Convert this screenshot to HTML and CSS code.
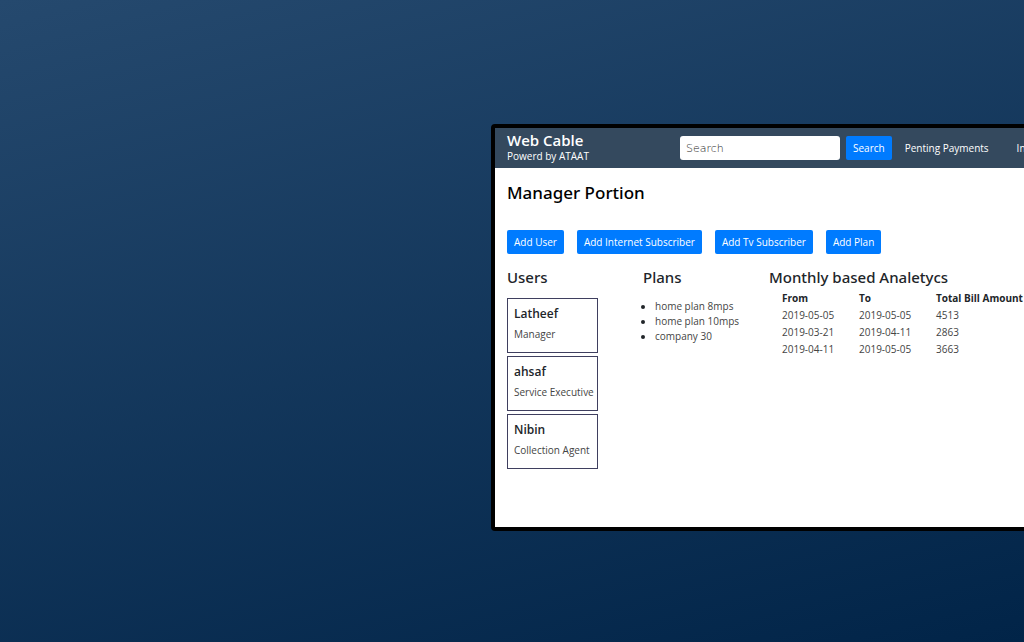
FILE: index.html
```html
<!DOCTYPE html>
<html lang="en">
<head>
<meta charset="utf-8">
<meta name="viewport" content="width=device-width, initial-scale=1">
<title>Web Cable</title>
<link rel="stylesheet" href="styles.css">
</head>
<body>
<main class="stage">
  <div class="window">
    <header class="navbar">
      <div class="brand">
        <div class="brand-name">Web Cable</div>
        <div class="brand-tag">Powerd by ATAAT</div>
      </div>
      <form class="search">
        <input class="search-box" type="text" placeholder="Search" aria-label="Search">
        <button class="btn" type="button">Search</button>
      </form>
      <nav class="links">
        <a class="link" href="#">Penting Payments</a>
        <a class="link" href="#">In</a>
      </nav>
    </header>
    <div class="content">
      <h1 class="title">Manager Portion</h1>
      <div class="actions">
        <button class="btn" type="button">Add User</button>
        <button class="btn" type="button">Add Internet Subscriber</button>
        <button class="btn" type="button">Add Tv Subscriber</button>
        <button class="btn" type="button">Add Plan</button>
      </div>
      <div class="columns">
        <section class="users">
          <h2 class="heading">Users</h2>
          <div class="cards">
            <article class="card"><h3 class="card-name">Latheef</h3><p class="card-role">Manager</p></article>
            <article class="card"><h3 class="card-name">ahsaf</h3><p class="card-role">Service Executive</p></article>
            <article class="card"><h3 class="card-name">Nibin</h3><p class="card-role">Collection Agent</p></article>
          </div>
        </section>
        <section>
          <h2 class="heading">Plans</h2>
          <ul class="plans">
            <li>home plan 8mps</li>
            <li>home plan 10mps</li>
            <li>company 30</li>
          </ul>
        </section>
        <section>
          <h2 class="heading">Monthly based Analetycs</h2>
          <table class="report">
            <thead><tr><th>From</th><th>To</th><th>Total Bill Amount</th></tr></thead>
            <tbody>
              <tr><td>2019-05-05</td><td>2019-05-05</td><td>4513</td></tr>
              <tr><td>2019-03-21</td><td>2019-04-11</td><td>2863</td></tr>
              <tr><td>2019-04-11</td><td>2019-05-05</td><td>3663</td></tr>
            </tbody>
          </table>
        </section>
      </div>
    </div>
  </div>
</main>
</body>
</html>
```
FILE: styles.css
```css
* {
  box-sizing: border-box;
}

body {
  margin: 0;
  font-family: "Open Sans", "Noto Sans", sans-serif;
  font-size: 10px;
  color: #212529;
}

.stage {
  display: flex;
  align-items: flex-start;
  min-height: 100vh;
  padding: 124px 0 24px 47.95%;
  overflow: hidden;
  background: linear-gradient(165deg, #25496e, #012448);
}

.window {
  flex: none;
  width: 720px;
  border: 4px solid #000;
  border-radius: 4px;
  background: #fff;
}

.navbar {
  display: flex;
  align-items: center;
  height: 40px;
  padding: 0 12px;
  background: #34495e;
  color: #fff;
}

.brand {
  width: 173px;
  padding-bottom: 2px;
}

.brand-name {
  font-size: 15px;
  font-weight: 600;
  line-height: 18px;
}

.brand-tag {
  line-height: 14px;
}

.search {
  display: flex;
  gap: 6px;
}

.search-box {
  width: 160px;
  height: 24px;
  padding: 0 6px;
  border: 0;
  border-radius: 3px;
  background: #fff;
  font-family: "DejaVu Sans", sans-serif;
  font-size: 11px;
  font-weight: 200;
}

.search-box::placeholder {
  color: #222;
  opacity: 1;
}

.btn {
  height: 24px;
  padding: 0 7px;
  border: 0;
  border-radius: 2px;
  background: #007bff;
  color: #fff;
  font-family: inherit;
  font-size: 10px;
  white-space: nowrap;
}

.links {
  display: flex;
  gap: 28px;
  padding-left: 13px;
}

.link {
  color: #fff;
  text-decoration: none;
  white-space: nowrap;
}

.content {
  padding: 12px 12px 58px;
}

.title {
  margin: 0 0 24px;
  font-family: "Noto Sans", sans-serif;
  font-size: 17px;
  font-weight: 500;
  line-height: 26px;
  color: #000;
}

.actions {
  display: flex;
  gap: 13px;
  margin-bottom: 12px;
}

.columns {
  display: grid;
  grid-template-columns: 136px 126px 1fr;
}

.heading {
  margin: 0;
  font-family: "Noto Sans", sans-serif;
  font-size: 15px;
  font-weight: 500;
  line-height: 22px;
}

.cards {
  display: flex;
  flex-direction: column;
  gap: 3px;
  width: 91px;
  margin-top: 10px;
}

.card {
  height: 55px;
  padding: 6px;
  border: 1px solid #3f3f5f;
  white-space: nowrap;
}

.card-name {
  margin: 0 0 4px;
  font-size: 12px;
  font-weight: 600;
  line-height: 18px;
}

.card-role {
  margin: 0;
  line-height: 14px;
  color: #444;
}

.plans {
  margin: 11px 0 0;
  padding-left: 12px;
  line-height: 15px;
  color: #444;
}

.plans li::marker {
  color: #212529;
}

.report {
  margin: 2px 0 0 13px;
  border-collapse: collapse;
  line-height: 17px;
}

.report th,
.report td {
  min-width: 77px;
  padding: 0;
  text-align: left;
  white-space: nowrap;
}

.report td {
  color: #444;
}
```
